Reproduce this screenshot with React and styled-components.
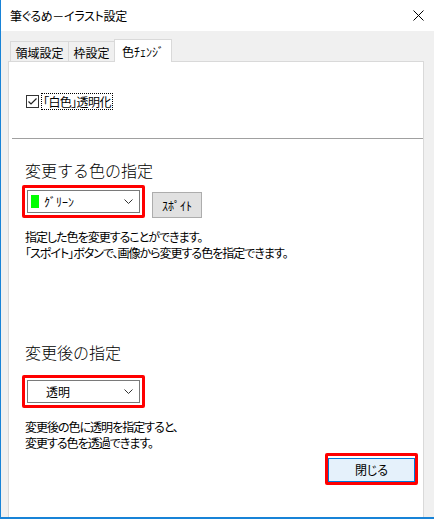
import React from 'react';
import { styled, createGlobalStyle } from 'styled-components';

const GlobalStyle = createGlobalStyle`
  html, body {
    margin: 0;
    padding: 0;
    background: #ffffff;
  }
  * {
    box-sizing: border-box;
  }
`;

const App = () => {
  return (
    <>
      <GlobalStyle />
      <Window>
        <TitleBar>
          <TitleText>筆ぐるめ－イラスト設定</TitleText>
          <CloseIcon width="11" height="11" viewBox="0 0 11 11">
            <path d="M0.5 0.5 L10.5 10.5 M10.5 0.5 L0.5 10.5" stroke="#000" strokeWidth="1" />
          </CloseIcon>
        </TitleBar>

        <Body>
          <TabRow>
            <Tab $width={59}>領域設定</Tab>
            <Tab $width={47}>枠設定</Tab>
            <Tab $width={58} $active>色ﾁｪﾝｼﾞ</Tab>
          </TabRow>

          <Panel>
            <CheckRow>
              <CheckBox>
                <svg width="11" height="11" viewBox="0 0 11 11">
                  <path d="M1.5 5.5 L4 8 L9.5 2.5" fill="none" stroke="#222" strokeWidth="1.2" />
                </svg>
              </CheckBox>
              <CheckLabel>「白色」透明化</CheckLabel>
            </CheckRow>

            <Separator />

            <Heading $top={20}>変更する色の指定</Heading>
            <ComboRow>
              <Highlight>
                <Combo>
                  <Swatch />
                  <ComboText>ｸﾞﾘｰﾝ</ComboText>
                  <Chevron />
                </Combo>
              </Highlight>
              <PlainButton>ｽﾎﾟｲﾄ</PlainButton>
            </ComboRow>
            <Note>
              <NoteLine>指定した色を変更することができます。</NoteLine>
              <NoteLine>「スポイト」ボタンで、画像から変更する色を指定できます。</NoteLine>
            </Note>

            <Heading $top={80}>変更後の指定</Heading>
            <ComboRow $top={12}>
              <Highlight>
                <Combo>
                  <ComboText $indent={15}>透明</ComboText>
                  <Chevron />
                </Combo>
              </Highlight>
            </ComboRow>
            <Note>
              <NoteLine>変更後の色に透明を指定すると、</NoteLine>
              <NoteLine>変更する色を透過できます。</NoteLine>
            </Note>

            <Footer>
              <CloseHighlight>
                <PrimaryButton>閉じる</PrimaryButton>
              </CloseHighlight>
            </Footer>
          </Panel>
        </Body>
      </Window>
    </>
  );
};

const Chevron = () => (
  <ChevronSvg width="9" height="5" viewBox="0 0 9 5">
    <path d="M0.5 0.5 L4.5 4.5 L8.5 0.5" fill="none" stroke="#333" strokeWidth="1" />
  </ChevronSvg>
);

export default App;

const jp = `"Noto Sans CJK JP", "Noto Sans", sans-serif`;

const Window = styled.div`
  width: 434px;
  height: 519px;
  display: flex;
  flex-direction: column;
  background: #f0f0f0;
  border-left: 1px solid #1883d7;
  border-bottom: 2px solid #1883d7;
  font-family: ${jp};
  color: #000;
  overflow: hidden;
`;

const TitleBar = styled.div`
  height: 31px;
  flex-shrink: 0;
  display: flex;
  align-items: center;
  background: #ffffff;
  padding-left: 9px;
  padding-right: 10px;
`;

const TitleText = styled.span`
  font-size: 12px;
  font-feature-settings: 'palt';
  letter-spacing: -0.3px;
`;

const CloseIcon = styled.svg`
  margin-left: auto;
`;

const Body = styled.div`
  flex: 1;
  display: flex;
  flex-direction: column;
  padding: 8px 10px 0 7px;
`;

const TabRow = styled.div`
  height: 22px;
  display: flex;
  align-items: flex-end;
  padding-left: 2px;
`;

const Tab = styled.div`
  width: ${(p) => p.$width}px;
  height: ${(p) => (p.$active ? 23 : 20)}px;
  margin-bottom: ${(p) => (p.$active ? -1 : 0)}px;
  margin-right: ${(p) => (p.$active ? 0 : -1)}px;
  position: relative;
  z-index: ${(p) => (p.$active ? 2 : 1)};
  display: flex;
  align-items: center;
  justify-content: center;
  padding-top: ${(p) => (p.$active ? 0 : 1)}px;
  background: ${(p) => (p.$active ? '#ffffff' : '#f0f0f0')};
  border: 1px solid #d9d9d9;
  border-bottom: none;
  font-size: 12px;
`;

const Panel = styled.div`
  flex: 1;
  display: flex;
  flex-direction: column;
  background: #ffffff;
  border: 1px solid #d9d9d9;
  border-bottom: none;
  padding: 0 0 0 3px;
`;

const CheckRow = styled.div`
  margin-top: 31px;
  margin-left: 14px;
  height: 17px;
  display: flex;
  align-items: center;
`;

const CheckBox = styled.div`
  width: 13px;
  height: 13px;
  border: 1px solid #333;
  display: flex;
  align-items: center;
  justify-content: center;
  background: #fff;
`;

const CheckLabel = styled.span`
  margin-left: 2px;
  height: 17px;
  display: flex;
  align-items: center;
  padding: 0 1px;
  border: 1px dotted #000;
  font-size: 12px;
  font-feature-settings: 'palt';
  letter-spacing: -0.6px;
`;

const Separator = styled.div`
  margin-top: 28px;
  height: 1px;
  background: #a0a0a0;
`;

const Heading = styled.div`
  margin-top: ${(p) => p.$top}px;
  margin-left: 13px;
  font-size: 16px;
  line-height: 22px;
  font-weight: 300;
`;

const ComboRow = styled.div`
  margin-top: ${(p) => p.$top ?? 4}px;
  margin-left: 10px;
  display: flex;
  align-items: flex-start;
`;

const Highlight = styled.div`
  border: 3px solid #ff0000;
  border-radius: 2px;
  padding: 2px;
`;

const Combo = styled.div`
  width: 113px;
  height: 23px;
  display: flex;
  align-items: center;
  border: 1px solid #7a7a7a;
  background: #fff;
  padding-left: 3px;
`;

const Swatch = styled.span`
  width: 8px;
  height: 13px;
  background: #00ff00;
  margin-right: 5px;
`;

const ComboText = styled.span`
  font-size: 12px;
  margin-left: ${(p) => p.$indent ?? 0}px;
`;

const ChevronSvg = styled.svg`
  margin-left: auto;
  margin-right: 6px;
`;

const PlainButton = styled.button`
  margin-top: 7px;
  margin-left: 7px;
  width: 50px;
  height: 26px;
  padding: 0;
  background: #e1e1e1;
  border: 1px solid #adadad;
  font-family: ${jp};
  font-size: 12px;
  color: #000;
`;

const Note = styled.div`
  margin-top: 11px;
  margin-left: 13px;
  display: flex;
  flex-direction: column;
`;

const NoteLine = styled.div`
  height: 16px;
  font-size: 12px;
  line-height: 16px;
  font-feature-settings: 'palt';
  letter-spacing: -1px;
  white-space: nowrap;
`;

const Footer = styled.div`
  margin-top: 2px;
  display: flex;
  justify-content: flex-end;
  padding-right: 5px;
`;

const CloseHighlight = styled.div`
  border: 3px solid #ff0000;
  border-radius: 2px;
`;

const PrimaryButton = styled.button`
  width: 87px;
  height: 24px;
  padding: 0;
  background: #e5f1fb;
  border: 1px solid #0078d7;
  font-family: ${jp};
  font-size: 12px;
  font-feature-settings: 'palt';
  color: #000;
`;
